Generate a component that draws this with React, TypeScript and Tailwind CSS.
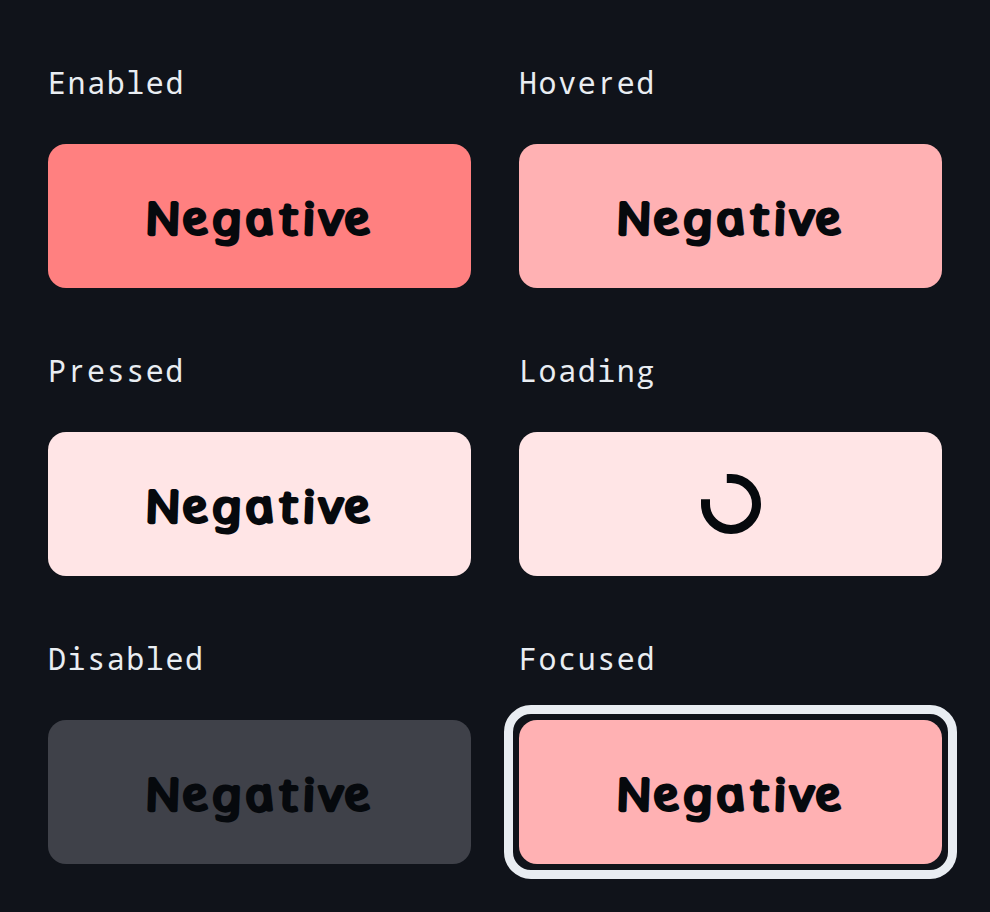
type ButtonState = {
  label: string;
  fill: string;
  loading?: boolean;
  focused?: boolean;
};

const states: ButtonState[] = [
  { label: 'Enabled', fill: 'bg-[#ff8080]' },
  { label: 'Hovered', fill: 'bg-[#ffb1b3]' },
  { label: 'Pressed', fill: 'bg-[#ffe5e6]' },
  { label: 'Loading', fill: 'bg-[#ffe5e6]', loading: true },
  { label: 'Disabled', fill: 'bg-[#3f4149]' },
  { label: 'Focused', fill: 'bg-[#ffb1b3]', focused: true },
];

function Spinner() {
  return (
    <svg width="60" height="60" viewBox="0 0 60 60" fill="none" aria-label="Loading">
      <path d="M25.8 4.5 H30 A25.5 25.5 0 1 1 4.5 30 V25.3" stroke="#06090d" strokeWidth="9" />
    </svg>
  );
}

// Rounded handwritten label: italics skewed back upright, with a round outline.
function Wordmark() {
  return (
    <svg width="240" height="72" viewBox="0 0 240 72" overflow="visible">
      <text
        transform="translate(9 53.5) skewX(12) scale(1.17 1)"
        dx="-1 3.2 3.2 4.8 4.9 5.2 4.4 3.3"
        dy="0 1 -1 2 -2 0 0 1"
        rotate="0 -6 0 -7 0 0 0 -6"
        fill="#06090d"
        stroke="#06090d"
        strokeWidth="4.4"
        strokeLinejoin="round"
        className="font-['Noto_Sans',sans-serif] text-[43px] font-light italic"
      >
        Negative
      </text>
    </svg>
  );
}

// Plain r and two-storey g, padded to the monospace cell.
function Label({ text }: { text: string }) {
  return (
    <h2 className="h-[72px] pt-0.5 font-['Noto_Sans_Mono','DejaVu_Sans_Mono',monospace] text-[30px] leading-[66px] tracking-[1.55px] text-[#e9edf2]">
      {text.split('').map((ch, i) =>
        ch === 'r' ? (
          <span key={i} className="px-[2.8px] font-['Noto_Sans',sans-serif]">r</span>
        ) : ch === 'g' ? (
          <span key={i} className="px-[0.8px] font-['Open_Sans',sans-serif]">g</span>
        ) : (
          ch
        ),
      )}
    </h2>
  );
}

function StateButton({ state }: { state: ButtonState }) {
  return (
    <button
      type="button"
      className={`relative flex h-36 w-full items-center justify-center rounded-[18px] ${state.fill}`}
    >
      {state.loading ? <Spinner /> : <Wordmark />}
      {state.focused && (
        <span className="absolute -inset-[15px] rounded-[27px] border-[9px] border-[#e9edf2]" />
      )}
    </button>
  );
}

export default function App() {
  return (
    <main className="h-[912px] w-[990px] overflow-hidden bg-[#10131a] p-12">
      <div className="grid grid-cols-2 gap-12">
        {states.map((state) => (
          <section key={state.label} className="flex flex-col gap-6">
            <Label text={state.label} />
            <StateButton state={state} />
          </section>
        ))}
      </div>
    </main>
  );
}
